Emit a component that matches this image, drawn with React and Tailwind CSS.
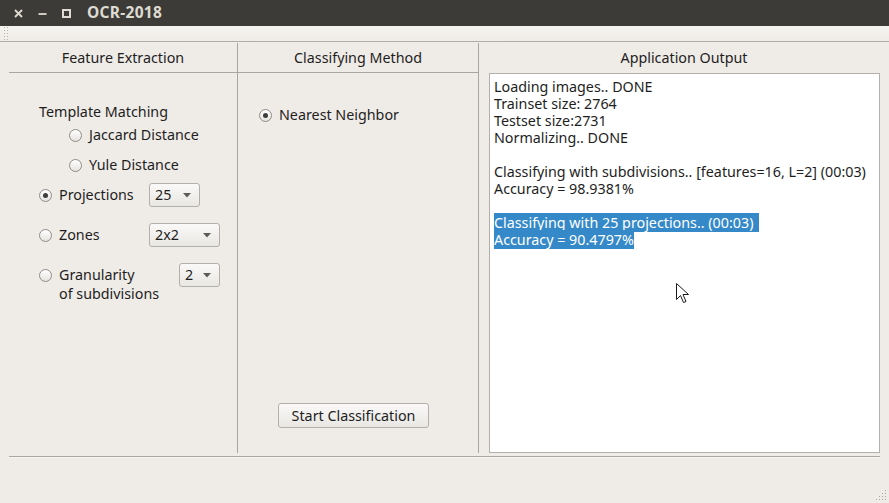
import React from 'react';

const FONT = { fontFamily: '"Noto Sans", "DejaVu Sans", sans-serif' };

const Radio = ({ checked }) => (
  <span className="inline-flex items-center justify-center w-[13px] h-[13px] rounded-full border border-[#8f8c87] bg-gradient-to-b from-[#ffffff] to-[#e6e3df] shrink-0">
    {checked && <span className="w-[5px] h-[5px] rounded-full bg-[#3c3c3c]" />}
  </span>
);

const Combo = ({ value, width }) => (
  <div
    className={`${width} h-[24px] flex items-center justify-between pl-[5px] pr-[8px] rounded-[3px] border border-[#b3b0ab] bg-gradient-to-b from-[#faf9f8] to-[#e9e7e3] text-[14.3px] text-[#1e1e1e]`}
  >
    <span>{value}</span>
    <svg width="8" height="5" viewBox="0 0 8 5">
      <path d="M0 0h8L4 4.5z" fill="#5e5c58" />
    </svg>
  </div>
);

const Header = ({ children, line }) => (
  <div className={`h-[30px] flex items-center justify-center text-[14.3px] text-[#1e1e1e] ${line ? 'border-b border-[#a9a5a0]' : ''}`}>
    {children}
  </div>
);

export default function App() {
  return (
    <div className="w-full h-[503px] bg-[#efebe7] flex flex-col overflow-hidden relative" style={FONT}>
      {/* title bar */}
      <div className="h-[26px] bg-[#3c3b37] flex items-center text-[#dfdbd2] shrink-0">
        <svg className="ml-[14px]" width="9" height="9" viewBox="0 0 9 9">
          <path d="M1 1l7 7M8 1l-7 7" stroke="#dfdbd2" strokeWidth="1.8" />
        </svg>
        <svg className="ml-[15px]" width="9" height="9" viewBox="0 0 9 9">
          <path d="M0.5 5h8" stroke="#dfdbd2" strokeWidth="1.8" />
        </svg>
        <svg className="ml-[15px]" width="9" height="9" viewBox="0 0 9 9">
          <rect x="1" y="1" width="7" height="7" fill="none" stroke="#dfdbd2" strokeWidth="2" />
        </svg>
        <span className="ml-[16px] text-[15.5px] font-bold tracking-[0.3px]">OCR-2018</span>
      </div>

      {/* toolbar strip */}
      <div className="h-[16px] shrink-0 bg-gradient-to-b from-[#f6f4f0] to-[#efebe7] border-b border-[#b1ada8] flex items-center pl-[4px]">
        <svg width="5" height="13" viewBox="0 0 5 13">
          {[0, 3, 6, 9, 12].map((y) => (
            <g key={y}>
              <rect x="0" y={y} width="1" height="1" fill="#b5b1ab" />
              <rect x="3" y={y} width="1" height="1" fill="#b5b1ab" />
            </g>
          ))}
        </svg>
      </div>

      {/* main */}
      <div className="flex mt-px h-[410px] pl-[9px]">
        {/* feature extraction */}
        <div className="w-[229px] border-r border-[#a9a5a0] flex flex-col">
          <Header line>Feature Extraction</Header>
          <div className="flex flex-col text-[14.3px] text-[#1e1e1e] pt-[30px] pl-[30px]">
            <div className="leading-[18px]">Template Matching</div>
            <div className="flex items-center gap-[7px] pl-[30px] mt-[5px] h-[18px]">
              <Radio />
              <span>Jaccard Distance</span>
            </div>
            <div className="flex items-center gap-[7px] pl-[30px] mt-[12px] h-[18px]">
              <Radio />
              <span>Yule Distance</span>
            </div>
            <div className="flex items-center mt-[9px] h-[24px]">
              <div className="flex items-center gap-[7px] w-[110px]">
                <Radio checked />
                <span>Projections</span>
              </div>
              <Combo value="25" width="w-[51px]" />
            </div>
            <div className="flex items-center mt-[16px] h-[24px]">
              <div className="flex items-center gap-[7px] w-[110px]">
                <Radio />
                <span>Zones</span>
              </div>
              <Combo value="2x2" width="w-[71px]" />
            </div>
            <div className="flex items-start mt-[16px]">
              <div className="flex flex-col w-[140px] pt-[3px]">
                <div className="flex items-center gap-[7px] h-[18px]">
                  <Radio />
                  <span>Granularity</span>
                </div>
                <span className="pl-[20px] leading-[20px]">of subdivisions</span>
              </div>
              <Combo value="2" width="w-[41px]" />
            </div>
          </div>
        </div>

        {/* classifying method */}
        <div className="w-[241px] border-r border-[#a9a5a0] flex flex-col">
          <Header line>Classifying Method</Header>
          <div className="flex items-center gap-[7px] pl-[21px] mt-[33px] h-[18px] text-[14.3px] text-[#1e1e1e]">
            <Radio checked />
            <span>Nearest Neighbor</span>
          </div>
          <div className="flex-1" />
          <div className="flex mb-[25px] pl-[40px]">
            <button className="h-[25px] w-[151px] rounded-[3px] border border-[#b3b0ab] bg-gradient-to-b from-[#faf9f8] to-[#e9e7e3] text-[14.3px] text-[#1e1e1e]">
              Start Classification
            </button>
          </div>
        </div>

        {/* application output */}
        <div className="flex-1 flex flex-col">
          <Header>Application Output</Header>
          <div className="flex-1 ml-[10px] mr-[9px] bg-white border border-[#b3b0ab] pl-[4px] pt-[4px] text-[14.3px] leading-[17px] text-[#1e1e1e]">
            <div>Loading images.. DONE</div>
            <div>Trainset size: 2764</div>
            <div>Testset size:2731</div>
            <div>Normalizing.. DONE</div>
            <div className="h-[17px]" />
            <div>Classifying with subdivisions.. [features=16, L=2] (00:03)</div>
            <div>Accuracy = 98.9381%</div>
            <div className="h-[17px]" />
            <div>
              <span className="bg-[#3589c9] text-white pr-[6px]">Classifying with 25 projections.. (00:03)</span>
            </div>
            <div>
              <span className="bg-[#3589c9] text-white">Accuracy = 90.4797%</span>
            </div>
          </div>
        </div>
      </div>

      {/* bottom separator */}
      <div className="mt-[3px] mx-[9px] h-[2px] border-t border-[#a9a5a0] border-b border-b-[#f8f6f3]" />

      {/* resize grip */}
      <svg className="absolute right-[2px] bottom-[2px]" width="12" height="12" viewBox="0 0 12 12">
        {[[10, 1], [7, 4], [10, 4], [4, 7], [7, 7], [10, 7], [1, 10], [4, 10], [7, 10], [10, 10]].map(([x, y]) => (
          <rect key={`${x}-${y}`} x={x} y={y} width="1" height="1" fill="#aaa6a0" />
        ))}
      </svg>

      {/* mouse pointer */}
      <svg className="absolute left-[676px] top-[283px]" width="14" height="21" viewBox="0 0 14 21">
        <path d="M0.5 0.5v16l4-4 3 7 2.5-1-3-7h5.5z" fill="#ffffff" stroke="#1a1a1a" strokeWidth="1" strokeLinejoin="round" />
      </svg>
    </div>
  );
}
